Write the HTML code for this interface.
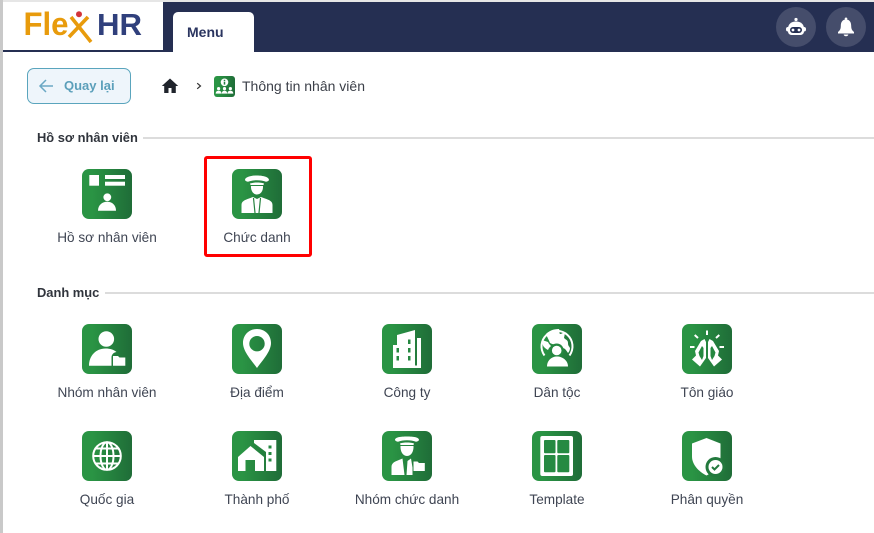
<!DOCTYPE html>
<html><head><meta charset="utf-8"><style>
html,body{margin:0;padding:0;background:#fff;width:874px;height:533px;overflow:hidden}
body{position:relative;font-family:"Liberation Sans",sans-serif;color:#3c4250}
.a{position:absolute}
.lbl{position:absolute;width:150px;text-align:center;font-size:13.6px;line-height:18px;color:#3f4553;white-space:nowrap}
.ic{position:absolute;width:50px;height:50px}
.t{position:absolute;left:37px;font-size:12.9px;font-weight:bold;line-height:16px;color:#30343c;white-space:nowrap}
.ln{position:absolute;height:2px;background:#dcdcdc;right:0}
</style></head><body>
<svg width="0" height="0" style="position:absolute"><defs>
<linearGradient id="g" x1="0" x2="1" y1="0" y2="0"><stop offset="0.2" stop-color="#2a9444"/><stop offset="1" stop-color="#1f6d38"/></linearGradient>
</defs></svg>

<div class="a" style="left:0;top:0;width:874px;height:2px;background:#e6e6e6"></div>
<div class="a" style="left:0;top:0;width:3px;height:533px;background:#c9c9c9"></div>
<div class="a" style="left:3px;top:50px;width:160px;height:1.5px;background:#252f52"></div>
<div class="a" style="left:163px;top:2px;width:711px;height:50px;background:#252f52"></div>
<div class="a" style="left:173px;top:12px;width:81px;height:40px;background:#fff;border-radius:5px 5px 0 0"></div>
<div class="a" style="left:187px;top:24px;font-size:14px;font-weight:bold;line-height:16px;color:#2b3560">Menu</div>

<svg class="a" style="left:3px;top:2px" width="160" height="48">
<text x="20.5" y="33" font-family="Liberation Sans" font-size="32" font-weight="bold" fill="#e89b0c" textLength="45" lengthAdjust="spacingAndGlyphs">Fle</text>
<path d="M68 15L88 40M85 15L66 35" stroke="#e89b0c" stroke-width="3.6" fill="none"/>
<circle cx="76" cy="12.3" r="3" fill="#d2343a"/>
<text x="94" y="33" font-family="Liberation Sans" font-size="31" font-weight="bold" fill="#30407c" textLength="45" lengthAdjust="spacingAndGlyphs">HR</text>
</svg>

<div class="a" style="left:776px;top:7px;width:40px;height:40px;border-radius:50%;background:#454d6b"></div>
<div class="a" style="left:826px;top:7px;width:40px;height:40px;border-radius:50%;background:#454d6b"></div>
<svg class="a" style="left:776px;top:7px" width="40" height="40">
<circle cx="20" cy="12.5" r="1.6" fill="#fff"/>
<path d="M20 14.500c-5 0-8 3-8 7v3a3.500 3.500 0 0 0 3.500 3.500h9a3.500 3.500 0 0 0 3.500-3.500v-3c0-4-3-7-8-7z" fill="#fff"/>
<rect x="10" y="20" width="20" height="4.500" rx="2" fill="#fff"/>
<rect x="14" y="20" width="12" height="6" rx="3" fill="#252f52"/>
<circle cx="17" cy="23" r="1.400" fill="#fff"/><circle cx="23" cy="23" r="1.400" fill="#fff"/>
</svg>
<svg class="a" style="left:826px;top:7px" width="40" height="40">
<circle cx="20" cy="11.800" r="1.300" fill="#fff"/>
<path d="M20 12.500c-3.800 0-5.200 3-5.200 6.500c0 3-1 4.500-2.800 6v1.500h16V25c-1.800-1.500-2.800-3-2.800-6c0-3.500-1.400-6.500-5.200-6.500z" fill="#fff"/>
<path d="M17.700 27.500h4.600a2.300 1.800 0 0 1-4.600 0z" fill="#fff"/>
</svg>

<div class="a" style="left:27px;top:68px;width:102px;height:34px;border:1px solid #5aa5bd;border-radius:7px;background:#eef5fb"></div>
<svg class="a" style="left:38px;top:78px" width="16" height="16"><path d="M15 8H2M8 2L2 8l6 6" fill="none" stroke="#6ba8c4" stroke-width="1.500"/></svg>
<div class="a" style="left:64px;top:78px;font-size:13px;font-weight:bold;line-height:16px;color:#5b9fba">Quay lại</div>

<svg class="a" style="left:161px;top:77px" width="18" height="18"><path d="M9 1.500L.8 9H3.200v7h4.300v-5h3v5h4.300V9h2.400z" fill="#20242c"/></svg>
<svg class="a" style="left:195px;top:81px" width="8" height="10"><path d="M2.200 2.200L5.500 5 2.200 7.800" fill="none" stroke="#333" stroke-width="1.200"/></svg>
<svg class="a" style="left:214px;top:76px" width="21" height="21" viewBox="0 0 50 50">
<rect width="50" height="50" rx="7" fill="url(#g)"/>
<circle cx="25" cy="15" r="9" fill="#fff"/><rect x="23.200" y="13.500" width="3.600" height="7" fill="#228040"/><rect x="23.200" y="9" width="3.600" height="3" fill="#228040"/>
<g fill="#fff"><circle cx="11" cy="30" r="3.800"/><circle cx="25" cy="30" r="3.800"/><circle cx="39" cy="30" r="3.800"/>
<path d="M4 42c0-5 3-7 7-7s7 2 7 7zM18.500 42c0-5 3-7 6.500-7s6.500 2 6.500 7zM32 42c0-5 3-7 7-7s7 2 7 7z"/></g>
</svg>
<div class="a" style="left:242px;top:78px;font-size:14px;line-height:16px;color:#3b3f48;white-space:nowrap">Thông tin nhân viên</div>

<div class="t" style="top:130px">Hồ sơ nhân viên</div><div class="ln" style="left:143px;top:137px"></div>
<div class="t" style="top:285px">Danh mục</div><div class="ln" style="left:105px;top:292px"></div>

<div class="a" style="left:204px;top:156px;width:102px;height:95px;border:3.500px solid #f00;border-radius:3px"></div>

<!-- Hồ sơ -->
<svg class="ic" style="left:82px;top:169px" viewBox="0 0 50 50"><rect width="50" height="50" rx="7" fill="url(#g)"/><g fill="#fff">
<rect x="7.300" y="6" width="9.700" height="10.700"/><rect x="23" y="6" width="20" height="4"/><rect x="23" y="12.700" width="20" height="4"/>
<circle cx="25.300" cy="28.300" r="3.900"/><path d="M16 41.700c0-5.500 4-9 9.200-9s8.800 3.500 8.800 9z"/></g></svg>
<!-- Chức danh -->
<svg class="ic" style="left:232px;top:169px" viewBox="0 0 50 50"><rect width="50" height="50" rx="7" fill="url(#g)"/><g fill="#fff">
<path d="M13 11c0-3 6-4.500 12-4.500s12 1.500 12 4.500c-.3 1-1.500 1.500-3 1.800c-2.500-1-5.500-1.500-9-1.500s-6.500 .5-9 1.500c-1.500-.3-2.700-.8-3-1.800z"/>
<path d="M18 14.500c4-1.300 10-1.300 14 0l-.5 1.500h-13z"/>
<path d="M19 17h12c.3 4.500-2 8.500-6 8.500s-6.300-4-6-8.500z"/>
<path d="M9.500 44V36c0-4 3.500-5 7.500-6.500L21 28l4 2 4-2 4 1.500c4 1.500 7.500 2.500 7.500 6.500v8z"/></g>
<path d="M21.500 29L23 44M28.500 29L27 44" stroke="#25833f" stroke-width="1.200"/></svg>
<!-- Nhóm NV -->
<svg class="ic" style="left:82px;top:324px" viewBox="0 0 50 50"><rect width="50" height="50" rx="7" fill="url(#g)"/><g fill="#fff">
<circle cx="24.300" cy="15" r="7.800"/><path d="M7 41.700c0-10 7-17.200 16.500-17.200c4.500 0 8.500 1.300 11 3.500c-3 .5-5 2.500-5 5.500v8.200z"/>
<path d="M31 41.700V32h5l1.500 1.500h5.800v8.200z"/></g></svg>
<!-- Địa điểm -->
<svg class="ic" style="left:232px;top:324px" viewBox="0 0 50 50"><rect width="50" height="50" rx="7" fill="url(#g)"/>
<path fill-rule="evenodd" d="M25 5c8 0 14 6 14 14c0 9-10 19-14 25c-4-6-14-16-14-25c0-8 6-14 14-14zM25 12a7.700 7.700 0 1 0 0 15.400a7.700 7.700 0 0 0 0-15.400z" fill="#fff"/></svg>
<!-- Công ty -->
<svg class="ic" style="left:382px;top:324px" viewBox="0 0 50 50"><rect width="50" height="50" rx="7" fill="url(#g)"/>
<path fill="#fff" d="M11 21h4V11L33 6v38H11zM35 14h4v30h-4z"/><rect x="33" y="41.500" width="6" height="2.500" fill="#fff"/>
<g fill="#258840"><rect x="14.500" y="24" width="2.500" height="4.500"/><rect x="14.500" y="32" width="2.500" height="4.500"/><rect x="26" y="15.500" width="2.500" height="4.500"/><rect x="26" y="24" width="2.500" height="4.500"/><rect x="26" y="32" width="2.500" height="4.500"/></g></svg>
<!-- Dân tộc -->
<svg class="ic" style="left:532px;top:324px" viewBox="0 0 50 50"><rect width="50" height="50" rx="7" fill="url(#g)"/>
<path d="M12.500 31.500A15.500 15.500 0 1 1 37.500 31.500" fill="none" stroke="#fff" stroke-width="2"/>
<path fill="#fff" d="M14 10c3-3 7-5 13-5c1 2 0 4 1 5c2 0 3-2 5-1l-1 5c2 2 4 2 4 5s1 3 2 5c0 2-1 4-2 5c-2-3-3-5-6-5c-1-3-3-4-5-4c-3 1-5 0-7-1c-1-3-3-6-4-9z"/>
<path fill="#fff" d="M10 16l6 2c1 2 2 3 3 4l-2 2-1 2c-2-1-3-2-4-3s-2-4-2-7z"/>
<circle cx="24.700" cy="26.500" r="7" fill="#258840"/><circle cx="24.700" cy="26.500" r="4.800" fill="#fff"/>
<path d="M15 42.500c0-6 4.500-10 10-10s11 4 11 10z" fill="#fff"/></svg>
<!-- Tôn giáo -->
<svg class="ic" style="left:682px;top:324px" viewBox="0 0 50 50"><rect width="50" height="50" rx="7" fill="url(#g)"/>
<g stroke="#fff" stroke-width="2" fill="none"><path d="M25 6.500v4.500M12.700 11l3.300 3M37.300 11L34 14M8 23h4.500M37.500 23h4.500"/></g>
<path fill="#fff" d="M22.500 15L24 18V34L18 42.500 10 35.500 14 31.500 13 27 19 17zM27.500 15L26 18V34L32 42.500 40 35.500 36 31.500 37 27 31 17z"/>
<path fill="#258840" d="M20 22L16.500 28.500 17.500 32 20 36 21.500 32V24zM30 22L33.500 28.500 32.500 32 30 36 28.500 32V24z"/></svg>
<!-- Quốc gia -->
<svg class="ic" style="left:82px;top:431px" viewBox="0 0 50 50"><rect width="50" height="50" rx="7" fill="url(#g)"/>
<g fill="none" stroke="#fff" stroke-width="2"><circle cx="25" cy="25" r="13.800"/><ellipse cx="25" cy="25" rx="6.500" ry="13.800"/><path d="M25 11v28M11.500 25h27M14 17.500h22M14 32.500h22"/></g></svg>
<!-- Thành phố -->
<svg class="ic" style="left:232px;top:431px" viewBox="0 0 50 50"><rect width="50" height="50" rx="7" fill="url(#g)"/>
<path fill="#fff" d="M22 9h22.300v31H34V21L22 12z"/>
<path fill="#fff" d="M18.500 15L32 26v14H23V29h-9.500v11H6V26z"/>
<g fill="#258840"><rect x="36.500" y="14.500" width="3" height="3"/><rect x="36.500" y="21" width="3" height="3"/><rect x="36.500" y="27.500" width="3" height="3"/></g></svg>
<!-- Nhóm chức danh -->
<svg class="ic" style="left:382px;top:431px" viewBox="0 0 50 50"><rect width="50" height="50" rx="7" fill="url(#g)"/><g fill="#fff">
<path d="M13 9c0-3 6-3.500 12-3.500s12 .5 12 3.500c-.3 1-1.500 1.500-3 1.800c-2.500-1-5.500-1.500-9-1.500s-6.500 .5-9 1.500c-1.500-.3-2.700-.8-3-1.800z"/>
<path d="M18 12.500c4-1.300 10-1.300 14 0l-.5 1.500h-13z"/>
<path d="M18.500 15h13c.3 5-2 10-6.500 10s-6.800-5-6.500-10z"/>
<path d="M9.500 44v-8c0-3.500 2.500-5 5-6l6-2.500 2 16.500zM29 27.500l1.500 9v7.500H24.500l1-14z"/>
<path d="M31.500 40v-9.500h4l1.500 1.500h5.800v8z"/></g></svg>
<!-- Template -->
<svg class="ic" style="left:532px;top:431px" viewBox="0 0 50 50"><rect width="50" height="50" rx="7" fill="url(#g)"/>
<rect x="8.300" y="5" width="32.700" height="40" rx="2" fill="#fff"/>
<g fill="#268a42"><rect x="12" y="9" width="11.500" height="13.300" rx="1"/><rect x="25.300" y="9" width="12" height="13.300" rx="1"/><rect x="12" y="24" width="11.500" height="17.300" rx="1"/><rect x="25.300" y="24" width="12" height="17.300" rx="1"/></g></svg>
<!-- Phân quyền -->
<svg class="ic" style="left:682px;top:431px" viewBox="0 0 50 50"><rect width="50" height="50" rx="7" fill="url(#g)"/>
<path fill="#fff" d="M24.500 7l14 5.500v13c0 8-6 15-14 19c-8-4-14.500-11-14.500-19v-13z"/>
<circle cx="33.500" cy="36" r="10" fill="#22793d"/><circle cx="33.500" cy="36" r="7" fill="#fff"/>
<path d="M30 36l2.500 2.500 4.500-4.500" fill="none" stroke="#22793d" stroke-width="2"/></svg>

<div class="lbl" style="left:32px;top:229px">Hồ sơ nhân viên</div>
<div class="lbl" style="left:182px;top:229px">Chức danh</div>
<div class="lbl" style="left:32px;top:384px">Nhóm nhân viên</div>
<div class="lbl" style="left:182px;top:384px">Địa điểm</div>
<div class="lbl" style="left:332px;top:384px">Công ty</div>
<div class="lbl" style="left:482px;top:384px">Dân tộc</div>
<div class="lbl" style="left:632px;top:384px">Tôn giáo</div>
<div class="lbl" style="left:32px;top:491px">Quốc gia</div>
<div class="lbl" style="left:182px;top:491px">Thành phố</div>
<div class="lbl" style="left:332px;top:491px">Nhóm chức danh</div>
<div class="lbl" style="left:482px;top:491px">Template</div>
<div class="lbl" style="left:632px;top:491px">Phân quyền</div>
</body></html>
